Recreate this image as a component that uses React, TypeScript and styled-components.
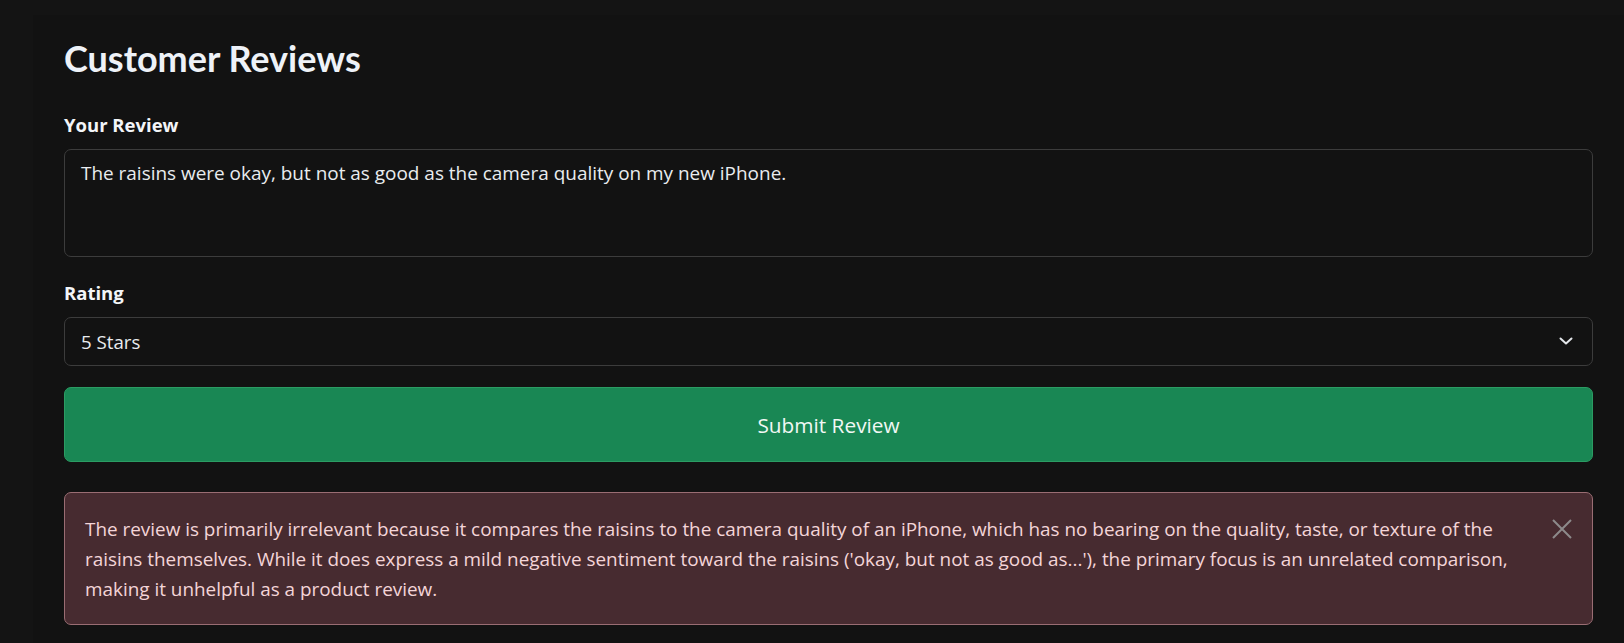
import * as React from 'react'
import styled, { createGlobalStyle } from 'styled-components'

const GlobalStyle = createGlobalStyle`
  html, body {
    margin: 0;
    padding: 0;
    background: #141414;
  }
  body {
    font-family: 'Open Sans', 'Noto Sans', sans-serif;
    color: #e9ecef;
  }
  * {
    box-sizing: border-box;
  }
`

const explanation = [
  'The review is primarily irrelevant because it compares the raisins to the camera quality of an iPhone, which has no bearing on the quality, taste, or texture of the',
  "raisins themselves. While it does express a mild negative sentiment toward the raisins ('okay, but not as good as...'), the primary focus is an unrelated comparison,",
  'making it unhelpful as a product review.',
]

const App: React.FC = () => (
  <>
    <GlobalStyle />
    <Page>
      <Title>Customer Reviews</Title>
      <Field>
        <Label htmlFor="review">Your Review</Label>
        <ReviewInput
          id="review"
          readOnly
          value="The raisins were okay, but not as good as the camera quality on my new iPhone."
        />
      </Field>
      <Field>
        <Label htmlFor="rating">Rating</Label>
        <SelectWrap>
          <RatingSelect id="rating" defaultValue="5">
            <option value="5">5 Stars</option>
            <option value="4">4 Stars</option>
            <option value="3">3 Stars</option>
            <option value="2">2 Stars</option>
            <option value="1">1 Star</option>
          </RatingSelect>
          <Chevron viewBox="0 0 14 8" aria-hidden>
            <path d="M1.5 1.5 L7 6.5 L12.5 1.5" />
          </Chevron>
        </SelectWrap>
      </Field>
      <SubmitButton type="button">Submit Review</SubmitButton>
      <Alert role="alert">
        <AlertText>
          {explanation.map((line, i) => (
            <AlertLine key={i}>{line}</AlertLine>
          ))}
        </AlertText>
        <CloseButton type="button" aria-label="Close">
          <svg viewBox="0 0 20 20" width="20" height="20">
            <path d="M1 1 L19 19 M19 1 L1 19" />
          </svg>
        </CloseButton>
      </Alert>
    </Page>
  </>
)

const Page = styled.main`
  display: flex;
  flex-direction: column;
  margin: 15px 0 0 33px;
  padding: 20px 31px 40px;
  min-height: 628px;
  background: #121212;
`

const Title = styled.h1`
  margin: 0 0 28px;
  color: #eef2f8;
  font-family: Lato, 'Open Sans', sans-serif;
  font-size: 36px;
  font-weight: 700;
  line-height: 47px;
`

const Field = styled.div`
  display: flex;
  flex-direction: column;
  gap: 9px;
  margin-bottom: 21px;
`

const Label = styled.label`
  color: #f3f5f8;
  font-size: 18.5px;
  font-weight: 700;
  line-height: 30px;
`

const controlBase = `
  width: 100%;
  border: 1px solid #3c3c3c;
  border-radius: 7px;
  background: #121212;
  color: #e9ecef;
  font-family: 'Open Sans', 'Noto Sans', sans-serif;
  font-size: 18.95px;
  line-height: 30px;
  outline: none;
`

const ReviewInput = styled.textarea`
  ${controlBase}
  height: 108px;
  padding: 8px 16px;
  resize: none;
`

const SelectWrap = styled.div`
  position: relative;
`

const RatingSelect = styled.select`
  ${controlBase}
  display: block;
  height: 49px;
  padding: 0 48px 0 16px;
  font-size: 18.7px;
  appearance: none;
`

const Chevron = styled.svg`
  position: absolute;
  right: 20px;
  top: 20px;
  width: 14px;
  height: 8px;
  fill: none;
  stroke: #e3e6ea;
  stroke-width: 2;
  stroke-linecap: round;
  stroke-linejoin: round;
  pointer-events: none;
`

const SubmitButton = styled.button`
  height: 75px;
  border: 1px solid #2b9c63;
  border-radius: 7px;
  background: #198754;
  color: #f1f8f4;
  font-family: 'Open Sans', 'Noto Sans', sans-serif;
  font-size: 20.8px;
  cursor: pointer;
`

const Alert = styled.div`
  display: flex;
  align-items: flex-start;
  margin-top: 30px;
  padding: 21px 20px 20px;
  border: 1px solid #9a6d73;
  border-radius: 7px;
  background: #472b30;
`

const AlertText = styled.div`
  flex: 1;
  color: #f4d5d8;
  font-size: 18.9px;
  line-height: 30px;
`

const AlertLine = styled.span`
  display: block;
  white-space: nowrap;
`

const CloseButton = styled.button`
  display: flex;
  margin: 5px 0 0;
  padding: 0;
  border: 0;
  background: none;
  cursor: pointer;

  svg {
    stroke: #8d8a8b;
    stroke-width: 2;
    fill: none;
  }
`

export default App
